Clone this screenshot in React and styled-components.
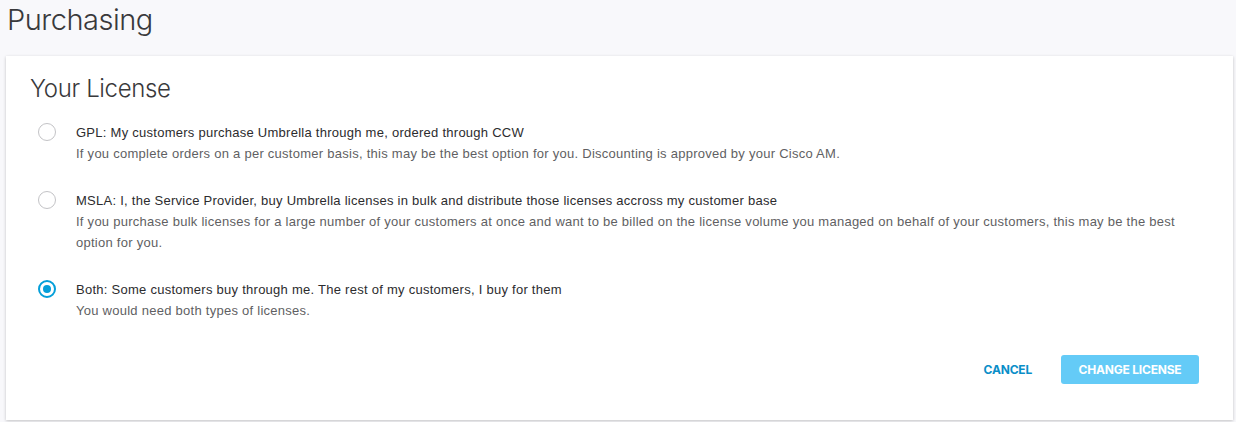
import React, { useState } from "react";
import styled, { createGlobalStyle } from "styled-components";

const GlobalStyle = createGlobalStyle`
  body {
    margin: 0;
    background: #f8f8fb;
    font-family: "Liberation Sans", Arial, sans-serif;
    color: #39393b;
  }
`;

const Page = styled.div`
  display: flex;
  flex-direction: column;
  padding: 0 3px 3px 6px;
`;

const PageTitle = styled.h1`
  margin: 0;
  height: 56px;
  padding-left: 1px;
  font-family: Inter, "Liberation Sans", sans-serif;
  font-weight: 300;
  font-size: 29px;
  line-height: 40px;
  color: #39393b;
  letter-spacing: -0.5px;
`;

const Card = styled.div`
  background: #fff;
  box-shadow: 0 1px 3px rgba(0, 0, 0, 0.22);
  padding: 18px 34px 36px 24px;
  display: flex;
  flex-direction: column;
`;

const CardTitle = styled.h2`
  margin: 0 0 18px;
  font-family: Inter, "Liberation Sans", sans-serif;
  font-weight: 300;
  font-size: 24px;
  line-height: 30px;
  letter-spacing: -0.35px;
  color: #39393b;
`;

const OptionList = styled.div`
  display: flex;
  flex-direction: column;
  gap: 26px;
  padding-left: 8px;
`;

const Option = styled.label`
  display: flex;
  align-items: flex-start;
  gap: 20px;
  cursor: pointer;
`;

const Radio = styled.span`
  flex: none;
  box-sizing: border-box;
  width: 18px;
  height: 18px;
  margin-top: 1px;
  border-radius: 50%;
  border: ${(p) => (p.checked ? "2px solid #049fd9" : "1px solid #c3c3c6")};
  display: flex;
  align-items: center;
  justify-content: center;
  &::after {
    content: "";
    width: 8px;
    height: 8px;
    border-radius: 50%;
    background: ${(p) => (p.checked ? "#049fd9" : "transparent")};
  }
`;

const OptionText = styled.div`
  display: flex;
  flex-direction: column;
  font-size: 13px;
  line-height: 21px;
  letter-spacing: 0.26px;
`;

const OptionLabel = styled.span`
  color: #2c2c2e;
`;

const OptionDesc = styled.span`
  color: #5f5f63;
`;

const Actions = styled.div`
  display: flex;
  justify-content: flex-end;
  align-items: center;
  gap: 29px;
  margin-top: 34px;
`;

const TextButton = styled.button`
  border: none;
  background: none;
  padding: 0;
  font-family: Inter, "Liberation Sans", sans-serif;
  font-weight: 700;
  font-size: 12px;
  letter-spacing: -0.2px;
  color: #0a8ec8;
  cursor: pointer;
`;

const PrimaryButton = styled.button`
  border: none;
  border-radius: 3px;
  height: 29px;
  width: 138px;
  background: #64cbf7;
  color: #fff;
  font-family: Inter, "Liberation Sans", sans-serif;
  font-weight: 700;
  font-size: 12px;
  letter-spacing: -0.2px;
  cursor: pointer;
`;

const options = [
  {
    id: "gpl",
    label: "GPL: My customers purchase Umbrella through me, ordered through CCW",
    desc: "If you complete orders on a per customer basis, this may be the best option for you. Discounting is approved by your Cisco AM.",
  },
  {
    id: "msla",
    label:
      "MSLA: I, the Service Provider, buy Umbrella licenses in bulk and distribute those licenses accross my customer base",
    desc: "If you purchase bulk licenses for a large number of your customers at once and want to be billed on the license volume you managed on behalf of your customers, this may be the best option for you.",
  },
  {
    id: "both",
    label: "Both: Some customers buy through me. The rest of my customers, I buy for them",
    desc: "You would need both types of licenses.",
  },
];

export default function App() {
  const [selected, setSelected] = useState("both");
  return (
    <>
      <GlobalStyle />
      <Page>
        <PageTitle>Purchasing</PageTitle>
        <Card>
          <CardTitle>Your License</CardTitle>
          <OptionList>
            {options.map((o) => (
              <Option key={o.id} onClick={() => setSelected(o.id)}>
                <Radio checked={selected === o.id} />
                <OptionText>
                  <OptionLabel>{o.label}</OptionLabel>
                  <OptionDesc>{o.desc}</OptionDesc>
                </OptionText>
              </Option>
            ))}
          </OptionList>
          <Actions>
            <TextButton>CANCEL</TextButton>
            <PrimaryButton>CHANGE LICENSE</PrimaryButton>
          </Actions>
        </Card>
      </Page>
    </>
  );
}
